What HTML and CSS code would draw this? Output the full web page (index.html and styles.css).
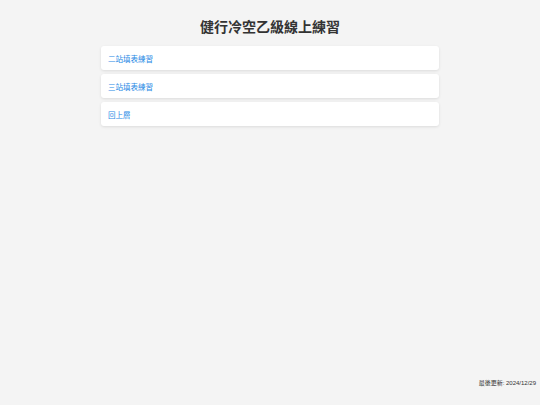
FILE: index.html
```html
<!DOCTYPE html>
<html lang="zh-TW">
<head>
  <meta charset="UTF-8">
  <meta name="viewport" content="width=device-width, initial-scale=1.0">
  <title>健行冷空乙級線上練習</title>
  <link rel="stylesheet" href="styles.css">
</head>
<body>
  <div class="page">
    <h1 class="title">健行冷空乙級線上練習</h1>
    <ul class="menu">
      <li class="menu-item"><a href="#">二站填表練習</a></li>
      <li class="menu-item"><a href="#">三站填表練習</a></li>
      <li class="menu-item"><a href="#">回上層</a></li>
    </ul>
  </div>
  <footer class="footer">最後更新: 2024/12/29</footer>
</body>
</html>
```

FILE: styles.css
```css
html, body {
  height: 100%;
}
body {
  font-family: "Liberation Sans", "Noto Sans CJK TC", sans-serif;
  background: #f4f4f4;
  margin: 0;
  display: flex;
  flex-direction: column;
}
.page {
  flex: 1;
  width: 338px;
  margin: 0 auto;
}
.title {
  font-size: 14px;
  font-weight: bold;
  color: #333;
  text-align: center;
  margin: 18px 0 10px;
  line-height: 18px;
}
.menu {
  list-style: none;
  margin: 0;
  padding: 0;
  display: flex;
  flex-direction: column;
  gap: 4px;
}
.menu-item {
  background: #fff;
  border-radius: 3px;
  box-shadow: 0 1px 3px rgba(0, 0, 0, 0.1);
  height: 24px;
  display: flex;
  align-items: center;
  padding: 0 7px;
}
.menu-item a {
  color: #1e88e5;
  text-decoration: none;
  font-size: 7.5px;
}
.footer {
  text-align: right;
  font-size: 6px;
  color: #333;
  padding: 0 4px 18px 0;
}
```
